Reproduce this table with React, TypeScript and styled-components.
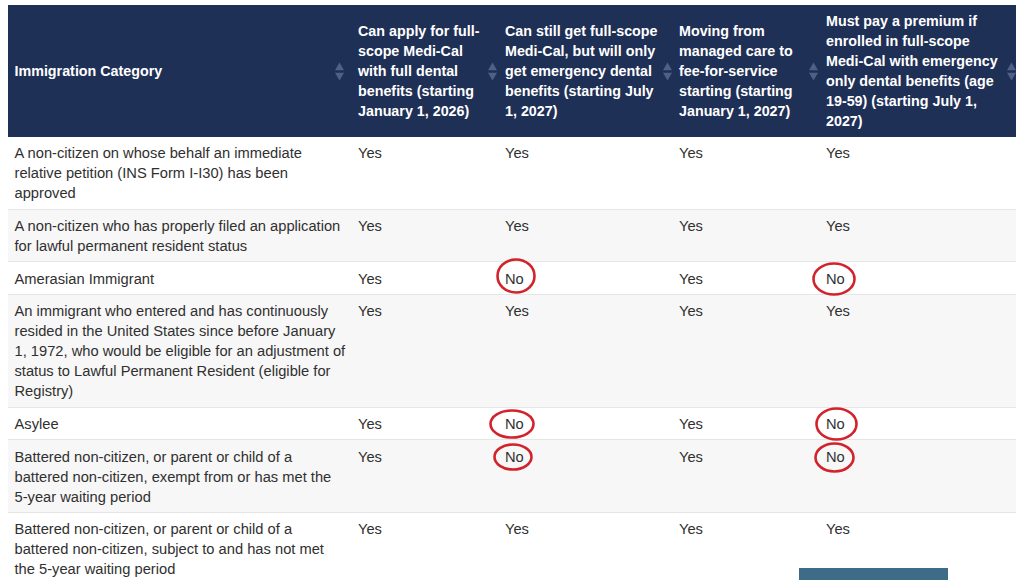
import React from "react";
import styled, { createGlobalStyle } from "styled-components";

const Global = createGlobalStyle`
  html, body { margin: 0; padding: 0; background: #ffffff; }
  body { font-family: "Liberation Sans", Arial, sans-serif; color: #333333; }
`;

const Page = styled.div`
  padding: 5px 8px 0 7.5px;
  width: 1024px;
  height: 580px;
  box-sizing: border-box;
  overflow: hidden;
`;

const Table = styled.table`
  width: 1008px;
  border-collapse: collapse;
  table-layout: fixed;
  line-height: 20px;
`;

const Col = styled.col<{ $w: number }>`
  width: ${(p) => p.$w}px;
`;

const HeadCell = styled.th<{ $iconRight: number }>`
  position: relative;
  background: #1f3057;
  color: #ffffff;
  font-size: 14.3px;
  font-weight: 700;
  text-align: left;
  vertical-align: middle;
  padding: 6px 16px 6px 7px;
  white-space: nowrap;
  overflow: hidden;
  svg {
    position: absolute;
    right: ${(p) => p.$iconRight}px;
    top: 50%;
    margin-top: -9px;
  }
`;

const BodyRow = styled.tr<{ $shade: boolean }>`
  background: ${(p) => (p.$shade ? "#f7f7f7" : "#ffffff")};
  border-bottom: 1px solid #e6e6e6;
`;

const Cell = styled.td`
  padding: 6.3px 7px 5.4px 7px;
  vertical-align: top;
  white-space: nowrap;
  font-size: 14.7px;
  color: #303030;
`;

const Mark = styled.span`
  position: relative;
  display: inline-block;
`;

const Ring = styled.svg<{ $l: number; $t: number }>`
  position: absolute;
  left: ${(p) => p.$l}px;
  top: ${(p) => p.$t}px;
  overflow: visible;
  pointer-events: none;
`;

const TopButton = styled.div`
  position: fixed;
  left: 799px;
  top: 568px;
  width: 149px;
  height: 40px;
  background: #3d6b88;
`;

const SortIcon = () => (
  <svg width="9" height="19" viewBox="0 0 9 19">
    <path d="M0 8.2 L4.5 0.5 L9 8.2 Z" fill="#4f6087" />
    <path d="M0 10.8 L4.5 18.5 L9 10.8 Z" fill="#4f6087" />
  </svg>
);

type RingSpec = { l: number; t: number; w: number; h: number; r: number };

const Circled = ({ spec, children }: { spec: RingSpec; children: React.ReactNode }) => (
  <Mark>
    {children}
    <Ring $l={spec.l} $t={spec.t} width={spec.w} height={spec.h}>
      <ellipse
        cx={spec.w / 2}
        cy={spec.h / 2}
        rx={spec.w / 2 - 1.5}
        ry={spec.h / 2 - 1.5}
        fill="none"
        stroke="#d2232c"
        strokeWidth="2.6"
        transform={`rotate(${spec.r} ${spec.w / 2} ${spec.h / 2})`}
      />
    </Ring>
  </Mark>
);

const Lines = ({ lines }: { lines: string[] }) => (
  <>
    {lines.map((l, i) => (
      <React.Fragment key={i}>
        {i > 0 && <br />}
        {l}
      </React.Fragment>
    ))}
  </>
);

const widths = [343.5, 147, 174, 147, 196.5];
const iconRights = [7, 1, 0, 1, 0];

const headers: string[][] = [
  ["Immigration Category"],
  ["Can apply for full-", "scope Medi-Cal", "with full dental", "benefits (starting", "January 1, 2026)"],
  ["Can still get full-scope", "Medi-Cal, but will only", "get emergency dental", "benefits (starting July", "1, 2027)"],
  ["Moving from", "managed care to", "fee-for-service", "starting (starting", "January 1, 2027)"],
  ["Must pay a premium if", "enrolled in full-scope", "Medi-Cal with emergency", "only dental benefits (age", "19-59) (starting July 1,", "2027)"],
];

type Value = { text: string; ring?: RingSpec };

type Row = { category: string[]; values: Value[] };

const Y: Value = { text: "Yes" };

const rows: Row[] = [
  {
    category: ["A non-citizen on whose behalf an immediate", "relative petition (INS Form I-I30) has been", "approved"],
    values: [Y, Y, Y, Y],
  },
  {
    category: ["A non-citizen who has properly filed an application", "for lawful permanent resident status"],
    values: [Y, Y, Y, Y],
  },
  {
    category: ["Amerasian Immigrant"],
    values: [
      Y,
      { text: "No", ring: { l: -9, t: -11, w: 40, h: 36, r: 0 } },
      Y,
      { text: "No", ring: { l: -14, t: -7, w: 44, h: 34, r: 0 } },
    ],
  },
  {
    category: [
      "An immigrant who entered and has continuously",
      "resided in the United States since before January",
      "1, 1972, who would be eligible for an adjustment of",
      "status to Lawful Permanent Resident (eligible for",
      "Registry)",
    ],
    values: [Y, Y, Y, Y],
  },
  {
    category: ["Asylee"],
    values: [
      Y,
      { text: "No", ring: { l: -16, t: -5, w: 46, h: 30, r: 0 } },
      Y,
      { text: "No", ring: { l: -11, t: -7, w: 43, h: 34, r: 0 } },
    ],
  },
  {
    category: ["Battered non-citizen, or parent or child of a", "battered non-citizen, exempt from or has met the", "5-year waiting period"],
    values: [
      Y,
      { text: "No", ring: { l: -12, t: -4, w: 40, h: 28, r: 0 } },
      Y,
      { text: "No", ring: { l: -12, t: -5, w: 41, h: 31, r: 0 } },
    ],
  },
  {
    category: ["Battered non-citizen, or parent or child of a", "battered non-citizen, subject to and has not met", "the 5-year waiting period"],
    values: [Y, Y, Y, Y],
  },
];

export default function App() {
  return (
    <>
      <Global />
      <Page>
        <Table>
          <colgroup>
            {widths.map((w, i) => (
              <Col key={i} $w={w} />
            ))}
          </colgroup>
          <thead>
            <tr>
              {headers.map((h, i) => (
                <HeadCell key={i} $iconRight={iconRights[i]}>
                  <Lines lines={h} />
                  <SortIcon />
                </HeadCell>
              ))}
            </tr>
          </thead>
          <tbody>
            {rows.map((r, i) => (
              <BodyRow key={i} $shade={i % 2 === 1}>
                <Cell>
                  <Lines lines={r.category} />
                </Cell>
                {r.values.map((v, j) => (
                  <Cell key={j}>
                    {v.ring ? <Circled spec={v.ring}>{v.text}</Circled> : v.text}
                  </Cell>
                ))}
              </BodyRow>
            ))}
          </tbody>
        </Table>
      </Page>
      <TopButton />
    </>
  );
}
